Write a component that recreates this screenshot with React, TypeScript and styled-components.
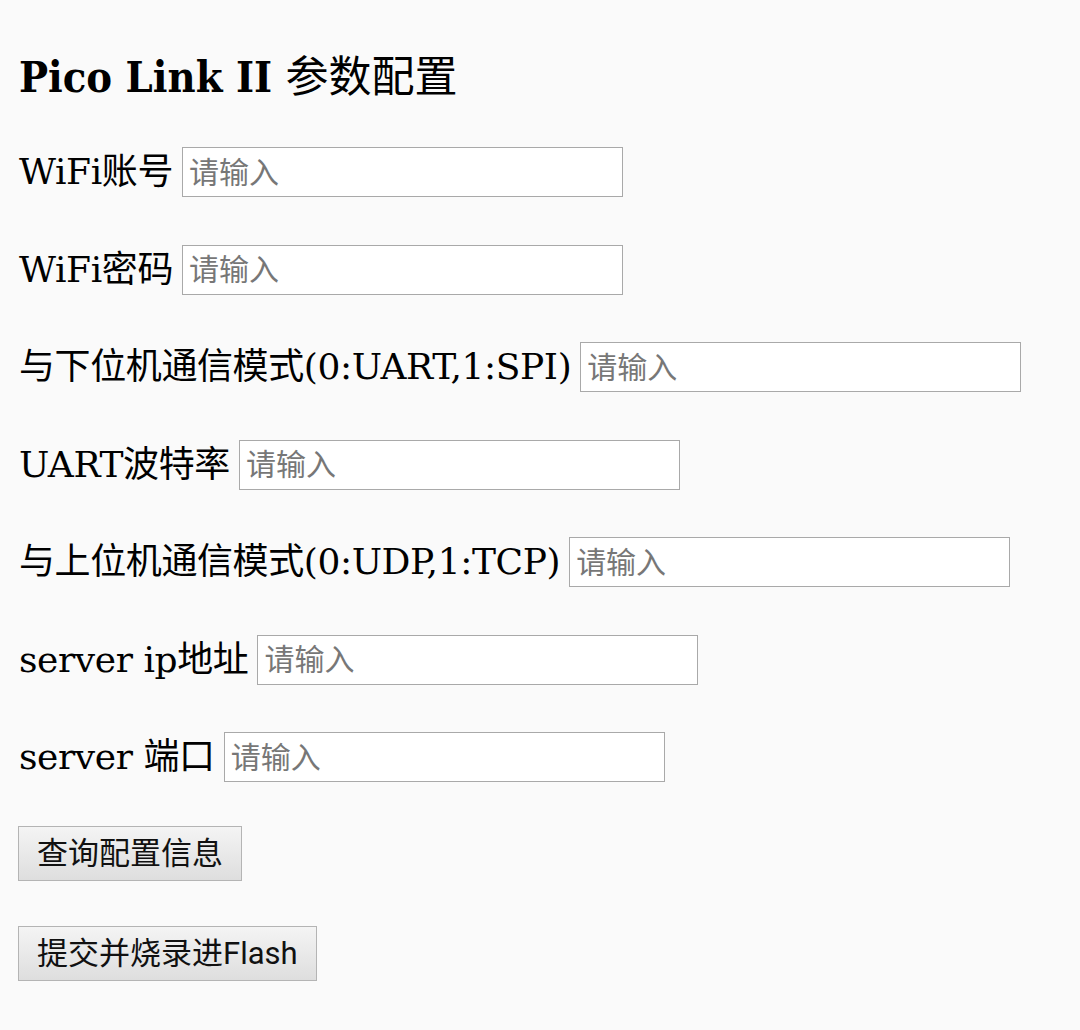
import React from "react";
import styled, { createGlobalStyle } from "styled-components";

const GlobalStyle = createGlobalStyle`
  html, body {
    margin: 0;
    padding: 0;
    background: #fafafa;
  }
`;

const Page = styled.div`
  display: flex;
  flex-direction: column;
  align-items: flex-start;
  padding: 49px 18px 40px;
  font-family: "DejaVu Serif", "Noto Sans CJK SC", serif;
  color: #000;
`;

const Title = styled.h3`
  margin: 0 0 46px 1px;
  font-family: "DejaVu Serif Condensed", "DejaVu Serif", "Noto Sans CJK SC", serif;
  font-stretch: condensed;
  font-size: 43px;
  line-height: 48px;
  font-weight: 700;

  span {
    font-family: "Noto Sans CJK SC", sans-serif;
    font-weight: 400;
  }
`;

const Form = styled.form`
  display: flex;
  flex-direction: column;
  align-items: flex-start;
  gap: 47.5px;
  margin: 0;
`;

const Row = styled.div`
  display: flex;
  align-items: center;
  gap: 9px;
  height: 50px;
`;

const Label = styled.label`
  font-size: 36px;
  line-height: 44px;
  letter-spacing: -0.4px;
  padding-left: 1px;
  white-space: nowrap;
`;

const Input = styled.input`
  box-sizing: border-box;
  width: 441px;
  height: 50px;
  margin: 0;
  padding: 0 6px;
  border: 1px solid #a9a9a9;
  border-radius: 0;
  background: #fff;
  font-family: "Roboto", "Noto Sans CJK SC", sans-serif;
  font-size: 30px;
  color: #000;
  outline: none;

  &::placeholder {
    color: #777;
  }
`;

const Actions = styled.div`
  display: flex;
  flex-direction: column;
  align-items: flex-start;
  gap: 45px;
  margin-top: 44px;
`;

const Button = styled.button`
  box-sizing: border-box;
  height: 55px;
  margin: 0;
  padding: 0 18px;
  border: 1px solid #b4b4b4;
  border-radius: 0;
  background: linear-gradient(#f4f4f4, #dedede);
  font-family: "Roboto", "Noto Sans CJK SC", sans-serif;
  font-size: 31px;
  line-height: 1;
  color: #111;
  cursor: pointer;
`;

const fields = [
  { id: "ssid", label: "WiFi账号" },
  { id: "password", label: "WiFi密码" },
  { id: "lowerMode", label: "与下位机通信模式(0:UART,1:SPI)" },
  { id: "baud", label: "UART波特率" },
  { id: "upperMode", label: "与上位机通信模式(0:UDP,1:TCP)" },
  { id: "serverIp", label: "server ip地址" },
  { id: "serverPort", label: "server 端口" },
];

const App: React.FC = () => {
  return (
    <>
      <GlobalStyle />
      <Page>
        <Title>
          Pico Link II <span>参数配置</span>
        </Title>
        <Form onSubmit={e => e.preventDefault()}>
          {fields.map(f => (
            <Row key={f.id}>
              <Label htmlFor={f.id}>{f.label}</Label>
              <Input id={f.id} type="text" placeholder="请输入" />
            </Row>
          ))}
        </Form>
        <Actions>
          <Button type="button">查询配置信息</Button>
          <Button type="button">提交并烧录进Flash</Button>
        </Actions>
      </Page>
    </>
  );
};

export default App;
